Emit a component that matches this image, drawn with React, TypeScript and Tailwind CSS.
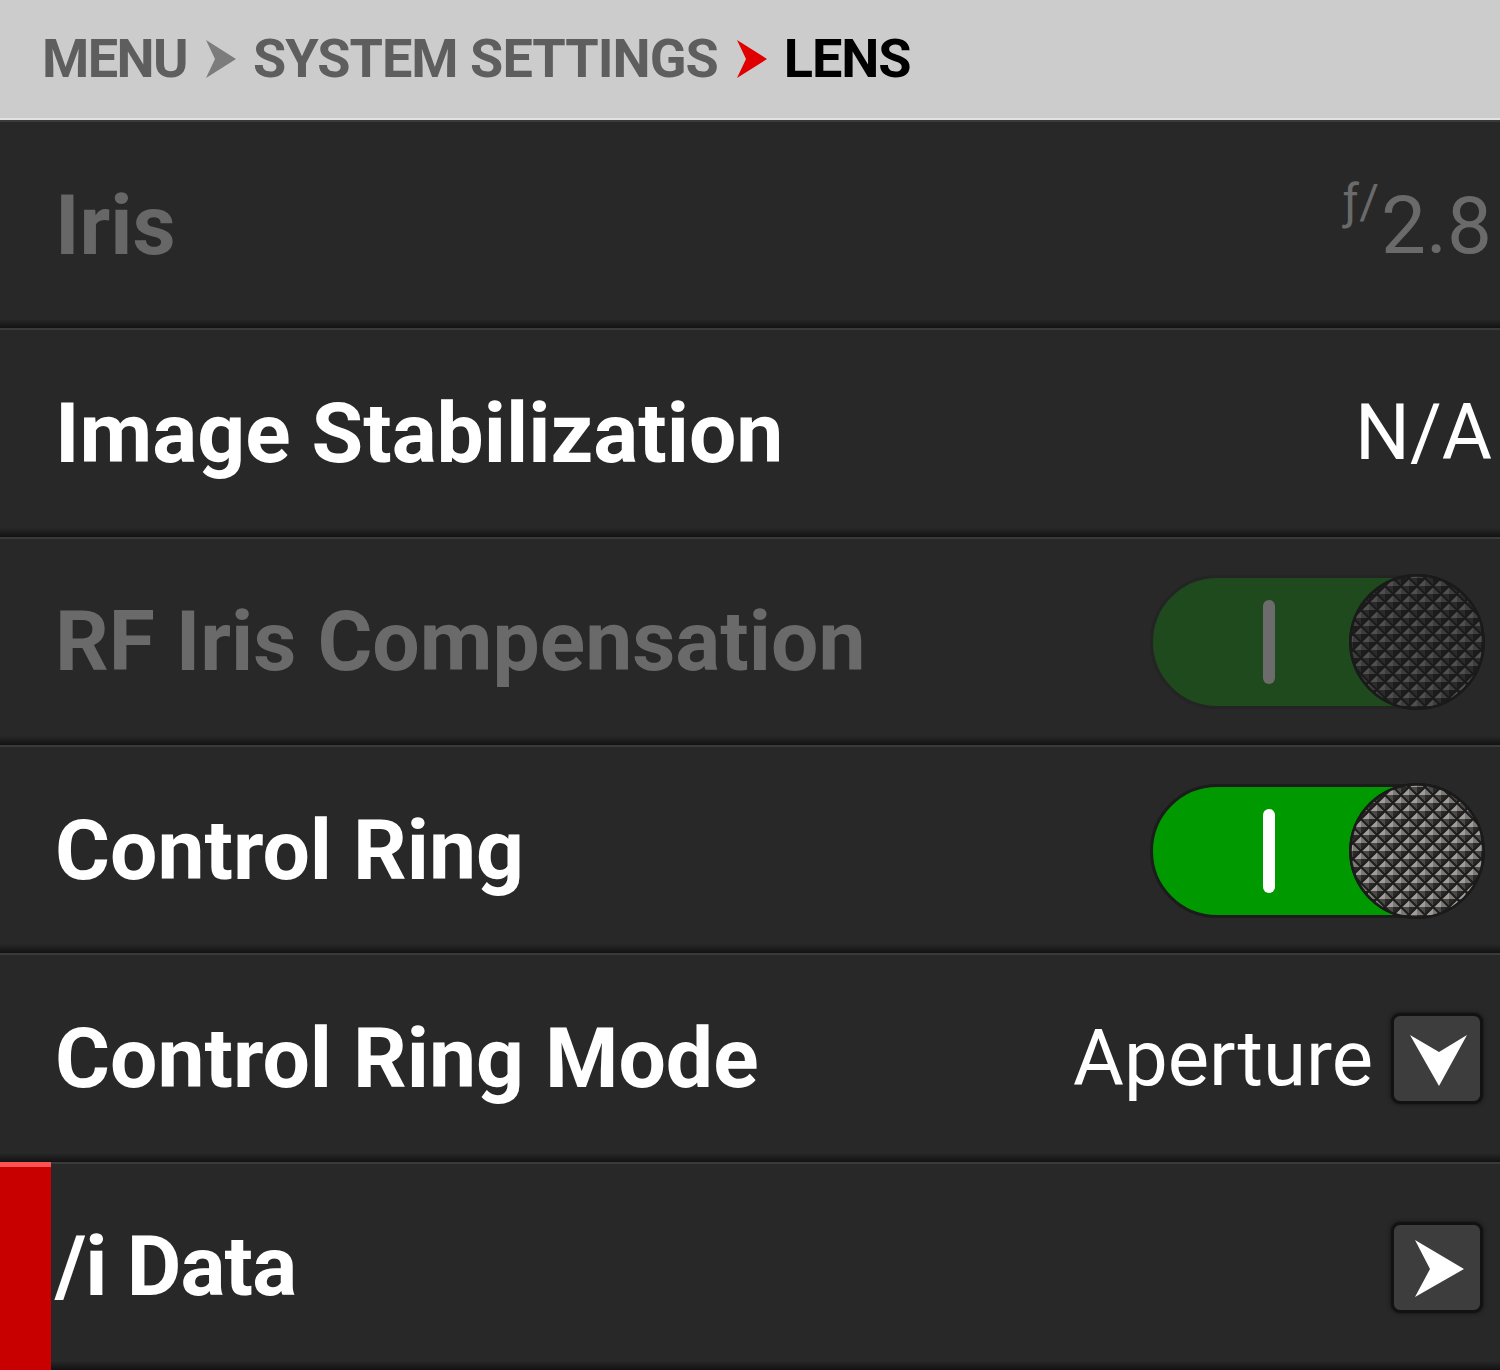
import React from "react";

const Stud = ({ x, y, h, dim }: { x: number; y: number; h: number; dim?: boolean }) => {
  const c = dim
    ? ["#514f4e", "#403e3d", "#1c1c1c", "#2c2b2b"]
    : ["#a19c98", "#7d7976", "#2a2928", "#4c4948"];
  return (
    <g>
      <polygon points={`${x - h},${y} ${x},${y - h} ${x},${y}`} fill={c[0]} />
      <polygon points={`${x},${y - h} ${x + h},${y} ${x},${y}`} fill={c[1]} />
      <polygon points={`${x + h},${y} ${x},${y + h} ${x},${y}`} fill={c[2]} />
      <polygon points={`${x},${y + h} ${x - h},${y} ${x},${y}`} fill={c[3]} />
    </g>
  );
};

const Knob = ({ dim }: { dim?: boolean }) => {
  const id = dim ? "k1" : "k0";
  const s = 16;
  const h = 6.6;
  return (
    <svg width="136" height="136" viewBox="0 0 136 136" className="absolute right-0 top-1/2 -translate-y-1/2">
      <defs>
        <pattern id={`p${id}`} width={s} height={s} patternUnits="userSpaceOnUse" x="4" y="4">
          <rect width={s} height={s} fill={dim ? "#1a1a1a" : "#1c1c1c"} />
          <Stud x={s / 2} y={s / 2} h={h} dim={dim} />
          <Stud x={0} y={0} h={h} dim={dim} />
          <Stud x={s} y={0} h={h} dim={dim} />
          <Stud x={0} y={s} h={h} dim={dim} />
          <Stud x={s} y={s} h={h} dim={dim} />
        </pattern>
        <clipPath id={`c${id}`}>
          <circle cx="68" cy="68" r="67" />
        </clipPath>
      </defs>
      <circle cx="68" cy="68" r="68" fill="#1a1a1a" />
      <rect width="136" height="136" fill={`url(#p${id})`} clipPath={`url(#c${id})`} />
      <circle cx="68" cy="68" r="66.5" fill="none" stroke="#1a1a1a" strokeWidth="2.5" />
    </svg>
  );
};

const Toggle = ({ dim }: { dim?: boolean }) => (
  <div className="relative w-[335px] h-[136px] mr-[7px]">
    <div
      className={`absolute left-0 top-[1px] w-[320px] h-[134px] rounded-full border-[3px] ${
        dim ? "bg-[#1e4a1e] border-[#242424]" : "bg-[#009a00] border-[#1c1c1c]"
      }`}
    >
      <div
        className={`absolute left-[110px] top-1/2 -translate-y-1/2 w-[12px] h-[84px] rounded-full ${
          dim ? "bg-[#6c6c6c]" : "bg-white"
        }`}
      />
    </div>
    <Knob dim={dim} />
  </div>
);

const SquareBtn = ({ dir }: { dir: "down" | "right" }) => (
  <div className="w-[92px] h-[91px] rounded-[9px] border-[3px] border-[#121212] bg-[#3d3d3d] shadow-[0_0_4px_rgba(0,0,0,0.6)] flex items-center justify-center mr-[9px]">
    <svg width="86" height="85" viewBox="0 0 86 85">
      {dir === "down" ? (
        <polygon points="16,19 45,36 73,19 45,70" fill="#fff" />
      ) : (
        <polygon points="21,15 70,44 21,72 36,44" fill="#fff" />
      )}
    </svg>
  </div>
);

const Row = ({ children, red }: { children: React.ReactNode; red?: boolean }) => (
  <div className="flex-1 flex flex-col bg-[#282828] relative">
    <div className="h-[2px] bg-[#3a3a3a]" />
    <div className="flex-1 flex items-center pl-[55px] pr-[8px] pt-[10px]">{children}</div>
    <div className="h-[9px] bg-gradient-to-b from-[#282828] to-[#121212]" />
    {red && (
      <div className="absolute left-0 top-0 bottom-0 w-[51px] bg-[#c80000] flex flex-col">
        <div className="h-[5px] bg-[#ff5252]" />
      </div>
    )}
  </div>
);

const Chevron = ({ color }: { color: string }) => (
  <svg width="32" height="38" viewBox="0 0 32 38" className="mx-[17px]">
    <polygon points="2,0 32,19 2,38 11,19" fill={color} />
  </svg>
);

export default function App() {
  const roboto = { fontFamily: "Roboto, 'Noto Sans', sans-serif" };
  return (
    <div className="w-[1500px] h-[1370px] flex flex-col bg-[#282828] overflow-hidden" style={roboto}>
      <div className="h-[120px] bg-[#cccccc] flex flex-col shrink-0">
        <div className="flex-1 flex items-center pl-[42px]">
          <span className="text-[54px] font-bold text-[#5e5e5e] leading-none tracking-[-0.03em]">MENU</span>
          <Chevron color="#7c7c7c" />
          <span className="text-[54px] font-bold text-[#5e5e5e] leading-none tracking-[-0.018em]">SYSTEM SETTINGS</span>
          <Chevron color="#e00000" />
          <span className="text-[54px] font-bold text-black leading-none tracking-[-0.02em]">LENS</span>
        </div>
        <div className="h-[2px] bg-[#e2e2e2]" />
      </div>
      <Row>
        <span className="text-[84px] font-bold text-[#676767] leading-none flex-1">Iris</span>
        <span className="text-[#6a6a6a] leading-none flex items-start">
          <span className="text-[48px] mt-[-8px] mr-[2px]">ƒ/</span>
          <span className="text-[80px]">2.8</span>
        </span>
      </Row>
      <Row>
        <span className="text-[84px] font-bold text-white leading-none flex-1">Image Stabilization</span>
        <span className="text-[77px] text-white leading-none">N/A</span>
      </Row>
      <Row>
        <span className="text-[84px] font-bold text-[#6a6a6a] leading-none flex-1">RF Iris Compensation</span>
        <Toggle dim />
      </Row>
      <Row>
        <span className="text-[84px] font-bold text-white leading-none flex-1">Control Ring</span>
        <Toggle />
      </Row>
      <Row>
        <span className="text-[84px] font-bold text-white leading-none flex-1">Control Ring Mode</span>
        <span className="text-[78px] text-white leading-none mr-[18px]">Aperture</span>
        <SquareBtn dir="down" />
      </Row>
      <Row red>
        <span className="text-[84px] font-bold text-white leading-none flex-1 tracking-[-0.01em]">/i Data</span>
        <SquareBtn dir="right" />
      </Row>
    </div>
  );
}
